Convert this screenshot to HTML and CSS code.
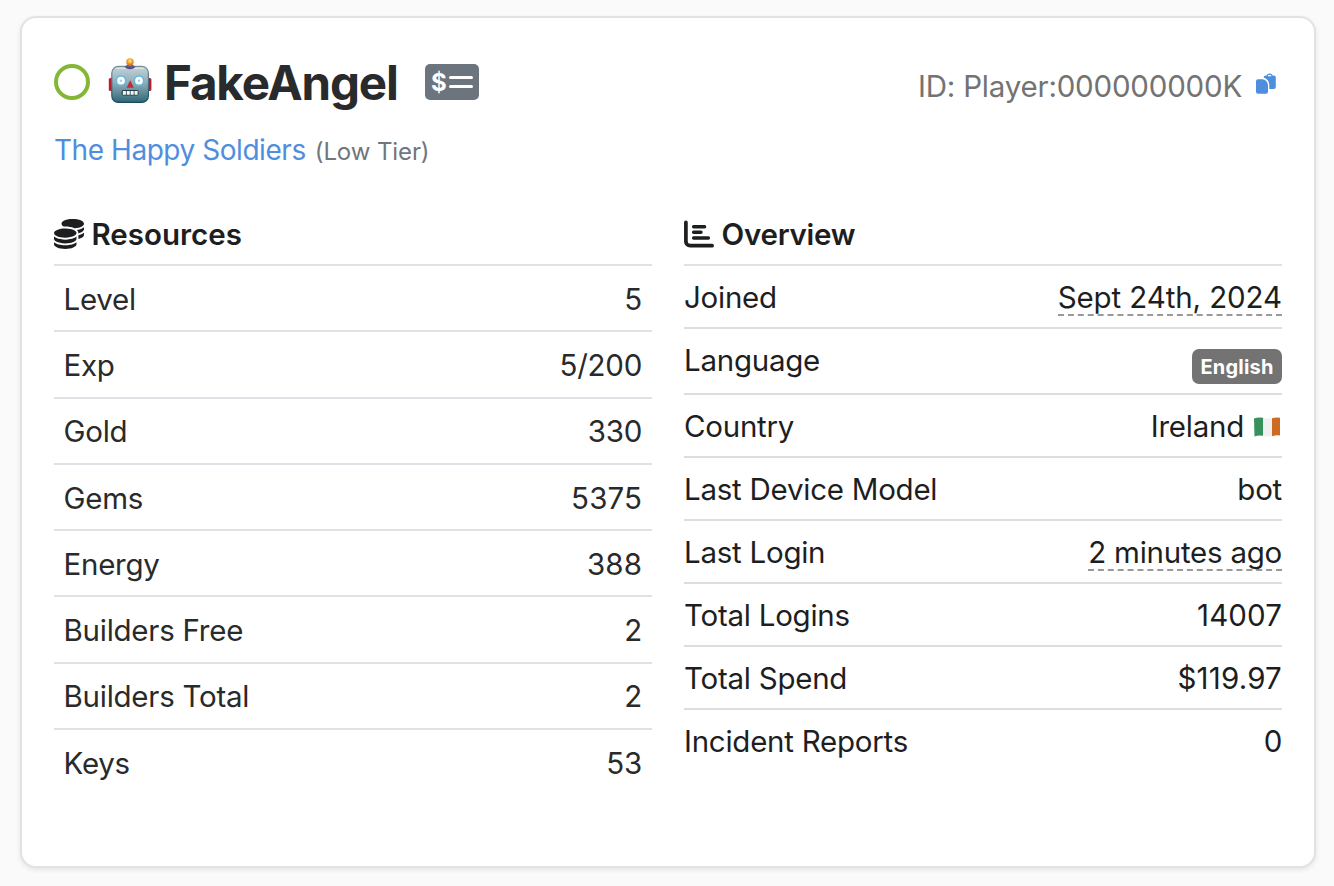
FILE: index.html
```html
<!DOCTYPE html>
<html lang="en">
<head>
<meta charset="utf-8">
<title>FakeAngel</title>
<link rel="stylesheet" href="styles.css">
</head>
<body>
<main class="card">
  <header class="head">
    <span class="status"></span>
    <svg class="robot" viewBox="0 0 44 48">
      <defs>
        <linearGradient id="face" x1="0" y1="0" x2="0" y2="1"><stop offset="0" stop-color="#c3d3d8"/><stop offset=".45" stop-color="#91adb8"/><stop offset="1" stop-color="#2f6778"/></linearGradient>
        <linearGradient id="rim" x1="0" y1="0" x2="0" y2="1"><stop offset="0" stop-color="#78919b"/><stop offset="1" stop-color="#164b5d"/></linearGradient>
        <radialGradient id="bulb" cy=".35"><stop offset="0" stop-color="#fff09a"/><stop offset=".5" stop-color="#f6b43b"/><stop offset="1" stop-color="#e07c1e"/></radialGradient>
      </defs>
      <rect x=".8" y="21" width="5" height="13" rx="1.500" fill="#b51f31"/>
      <rect x="38.400" y="21" width="5" height="13" rx="1.500" fill="#b51f31"/>
      <path d="M17.500 11c0-3 2-4 4.500-4s4.500 1 4.500 4z" fill="#554f86"/>
      <circle cx="22" cy="5" r="3.700" fill="url(#bulb)"/>
      <rect x="3.800" y="9.400" width="36.600" height="36" rx="6.500" fill="url(#face)" stroke="url(#rim)" stroke-width="1.200"/>
      <path d="M8 11.400h28" stroke="#dfe8ea" stroke-linecap="round"/>
      <path d="M16.500 9.200c1 4 10 4 11 0z" fill="#554f86"/>
      <g fill="#fff" stroke="#62b9e2" stroke-width="1.700"><circle cx="13" cy="23.700" r="4.700"/><circle cx="31" cy="23.700" r="4.700"/></g>
      <g fill="#a5cddd"><circle cx="13" cy="23.700" r="1.200"/><circle cx="31" cy="23.700" r="1.200"/></g>
      <path d="M22.200 23.300l3.600 7.400h-7.200z" fill="#c52a34"/>
      <rect x="13.600" y="33" width="17" height="5.600" rx="2" fill="#233e49"/>
      <path d="M14.800 35.800h14.800" stroke="#f4f8f8" stroke-width="3.800" stroke-dasharray="3.100 .8"/>
    </svg>
    <h1 class="name">FakeAngel</h1>
    <svg class="bill" viewBox="0 0 54 36">
      <rect width="54" height="36" rx="5" fill="#6c757d"/>
      <text class="dollar" x="6" y="27">$</text>
      <path d="M25.500 13.500h21M25.500 22.500h21" stroke="#fff" stroke-width="3" stroke-linecap="round"/>
    </svg>
    <span class="pid">ID: Player:000000000K</span>
    <svg class="copy" viewBox="0 0 20 22" fill="#4f8edc">
      <path d="M2 6.300h4.800q4.700 1 5.200 5.900V18.800a2 2 0 0 1-2 2H2a2 2 0 0 1-2-2V8.300a2 2 0 0 1 2-2z"/>
      <path fill-rule="evenodd" d="M7.600 4.600a2.200 2.200 0 0 1 2.100-2h.9a3.200 3.200 0 0 1 6 0h1.200a2 2 0 0 1 2 2v9.400a2 2 0 0 1-2 2H13.300V11.300Q12.400 6 7.600 4.600zM12 2v1.200h3.200V2z"/>
    </svg>
  </header>
  <div class="guild"><a class="link">The Happy Soldiers</a><span class="tier">(Low Tier)</span></div>
  <div class="columns">
    <section>
      <h2 class="title">
        <svg class="icon" viewBox="0 0 512 512" fill="#1d1e1f"><path d="M512 80c0 18-14.300 34.600-38.400 48c-29.100 16.100-72.500 27.500-122.300 30.900c-3.700-1.800-7.400-3.500-11.300-5C300.600 137.400 248.200 128 192 128c-8.300 0-16.400 .2-24.500 .6l-1.100-.6C142.300 114.600 128 98 128 80c0-44.200 86-80 192-80S512 35.800 512 80zM160.700 161.100c10.200-.7 20.700-1.100 31.300-1.100c62.200 0 117.400 12.300 152.500 31.400C369.300 204.900 384 221.700 384 240c0 4-.7 7.900-2.100 11.700c-4.600 13.200-17 25.300-35 35.500c0 0 0 0 0 0c-.1 .1-.3 .1-.4 .2c-.3 .2-.6 .3-.9 .5c-35 19.400-90.800 32-153.600 32c-59.600 0-112.900-11.300-148.200-29.100c-1.900-.9-3.700-1.900-5.500-2.900C14.300 274.600 0 258 0 240c0-34.800 53.400-64.500 128-75.400c10.500-1.500 21.400-2.700 32.700-3.500zM416 240c0-21.900-10.600-39.900-24.100-53.400c28.300-4.400 54.200-11.400 76.200-20.500c16.300-6.800 31.500-15.200 43.900-25.500V176c0 19.300-16.500 37.100-43.800 50.900c-14.600 7.400-32.400 13.700-52.400 18.500c.1-1.800 .2-3.500 .2-5.300zm-32 96c0 18-14.300 34.600-38.400 48c-1.800 1-3.600 1.900-5.500 2.900C304.900 404.700 251.600 416 192 416c-62.800 0-118.600-12.600-153.600-32C14.300 370.600 0 354 0 336V300.600c12.500 10.300 27.600 18.700 43.900 25.500C83.400 342.600 135.800 352 192 352s108.600-9.400 148.100-25.900c7.800-3.200 15.300-6.900 22.400-10.900c6.100-3.400 11.800-7.200 17.200-11.200c1.500-1.100 2.900-2.300 4.300-3.400V304v5.700V336zm32 0V304 278.100c19-4.200 36.500-9.500 52.100-16c16.300-6.800 31.500-15.200 43.900-25.500V272c0 10.500-5 21-14.900 30.900c-16.300 16.300-45 29.700-81.300 38.400c.1-1.700 .2-3.500 .2-5.300zM192 448c56.200 0 108.600-9.400 148.100-25.900c16.300-6.800 31.500-15.200 43.900-25.500V432c0 44.200-86 80-192 80S0 476.200 0 432V396.600c12.500 10.300 27.600 18.700 43.900 25.500C83.400 438.600 135.800 448 192 448z"/></svg>
        <span class="res">Resources</span>
      </h2>
      <div class="row wide"><span>Level</span><span>5</span></div>
      <div class="row wide"><span>Exp</span><span>5/200</span></div>
      <div class="row wide"><span>Gold</span><span>330</span></div>
      <div class="row wide"><span>Gems</span><span class="num">5375</span></div>
      <div class="row wide"><span>Energy</span><span class="num">388</span></div>
      <div class="row wide"><span>Builders Free</span><span>2</span></div>
      <div class="row wide"><span>Builders Total</span><span>2</span></div>
      <div class="row wide"><span>Keys</span><span>53</span></div>
    </section>
    <section>
      <h2 class="title">
        <svg class="icon" viewBox="0 0 30 30" fill="none" stroke="#1d1e1f" stroke-width="3.700" stroke-linecap="round" stroke-linejoin="round"><path d="M1.900 3.300V22.500a4.200 4.200 0 0 0 4.200 4.200H28.100"/><path d="M9.600 7.700H20.600M9.600 13.300h7.400M9.600 19H24.400" stroke-width="3.400"/></svg>
        <span>Overview</span>
      </h2>
      <div class="row"><span>Joined</span><span class="dashed date">Sept 24th, 2024</span></div>
      <div class="row lang"><span>Language</span><span class="badge">English</span></div>
      <div class="row"><span>Country</span><span class="country">Ireland<svg class="flag" viewBox="0 0 26 20"><path d="M0 1.500Q4 0 9 .7V18.700Q4 18 .5 19.500z" fill="#36915c"/><path d="M9 .7Q14 2 18 1.300V19.300Q14 20 9 18.700z" fill="#f0f0f0"/><path d="M18 1.300Q22 0 26 .8V18.500Q22 18 18 19.300z" fill="#cd6b22"/></svg></span></div>
      <div class="row"><span>Last Device Model</span><span>bot</span></div>
      <div class="row"><span>Last Login</span><span class="dashed">2 minutes ago</span></div>
      <div class="row"><span>Total Logins</span><span class="num">14007</span></div>
      <div class="row"><span>Total Spend</span><span class="spend">$119.97</span></div>
      <div class="row"><span>Incident Reports</span><span>0</span></div>
    </section>
  </div>
</main>
</body>
</html>
```
FILE: styles.css
```css
* { box-sizing: border-box; }
body {
  margin: 0;
  padding: 16px 18px 18px 20px;
  height: 886px;
  background: #fafafa;
  color: #1d1e1f;
  font-family: Inter, "Liberation Sans", sans-serif;
  font-size: 29.500px;
  letter-spacing: -.25px;
  overflow: hidden;
}
.card {
  height: 852px;
  padding: 32px;
  background: #fff;
  border: 2px solid #e2e2e2;
  border-radius: 16px;
  box-shadow: 0 2px 5px rgba(0, 0, 0, .09);
}
.head { display: flex; align-items: center; height: 64px; }
.status { width: 36px; height: 36px; border: 4px solid #83b735; border-radius: 50%; }
.robot { width: 44px; height: 48px; margin: -2px 0 0 18px; }
.name { margin: 2px 0 0 12px; width: 235px; font-size: 47.500px; line-height: 60px; font-weight: 700; letter-spacing: -1.150px; color: #292a2b; white-space: nowrap; }
.bill { width: 54px; height: 36px; margin-left: 26px; }
.dollar { font-size: 24px; font-weight: 700; fill: #fff; }
.pid { margin: 8px 0 0 auto; font-size: 29.500px; letter-spacing: -.2px; color: #737373; white-space: nowrap; }
.copy { width: 20px; height: 22px; margin: 4px 6px 0 14px; }
.guild { display: flex; align-items: baseline; gap: 9px; height: 70px; line-height: 72px; white-space: nowrap; }
.link { font-size: 28px; letter-spacing: -.450px; color: #4f8edc; }
.tier { font-size: 24px; letter-spacing: -.1px; color: #6f767d; }
.columns { display: grid; grid-template-columns: 598px 598px; gap: 32px; margin-top: 20px; }
.title { display: flex; align-items: center; gap: 7.500px; margin: 0; height: 62px; border-bottom: 2px solid #dee2e6; font-size: 29.500px; font-weight: 600; }
.title .icon { width: 30px; height: 30px; }
.res { letter-spacing: 0; }
.row { display: flex; justify-content: space-between; height: 63px; padding-top: 12px; line-height: 38px; border-bottom: 2px solid #ddd; white-space: nowrap; }
.row:last-child { border-bottom: 0; }
.row.wide { height: 66.300px; padding: 13.700px 10px 0 9.500px; border-color: #dee2e6; color: #292a2b; }
.row.lang { height: 66px; }
.dashed { height: 38px; border-bottom: 2px dashed #999; }
.date { letter-spacing: -.1px; }
.num { letter-spacing: .1px; }
.spend { letter-spacing: .2px; }
.badge { width: 90px; height: 35px; margin-top: 8px; border-radius: 7px; background: #737373; color: #fff; font-size: 20px; font-weight: 700; letter-spacing: .2px; line-height: 36px; text-align: center; }
.flag { width: 26px; height: 20px; margin: 0 2px 0 10px; }
```
